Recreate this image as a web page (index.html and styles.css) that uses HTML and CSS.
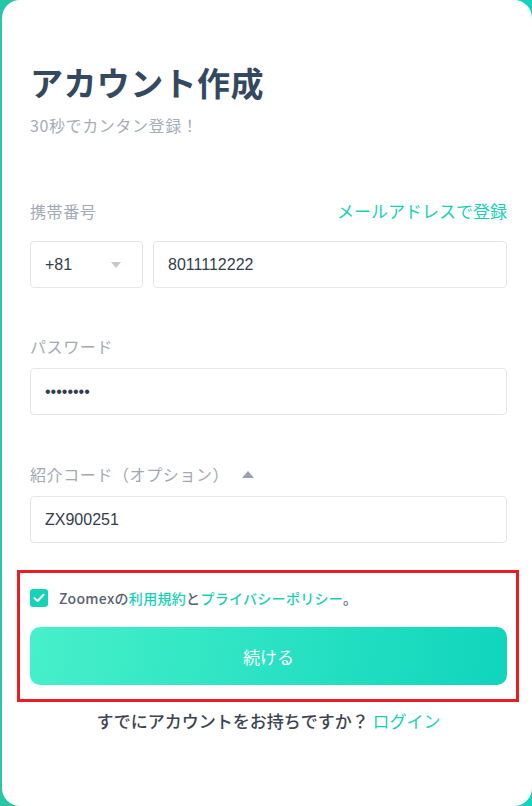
FILE: index.html
```
<!DOCTYPE html>
<html lang="ja">
<head>
  <meta charset="UTF-8">
  <title>アカウント作成</title>
  <link rel="stylesheet" href="styles.css">
</head>
<body>
  <div class="card">
    <h1>アカウント作成</h1>
    <p class="sub">30秒でカンタン登録！</p>

    <div class="label-row">
      <label for="phone">携帯番号</label>
      <a href="#" class="switch">メールアドレスで登録</a>
    </div>
    <div class="phone-row">
      <div class="country">
        <span>+81</span>
        <span class="caret-down"></span>
      </div>
      <input type="text" id="phone" class="field" value="8011112222">
    </div>

    <label for="password" class="label">パスワード</label>
    <input type="password" id="password" class="field" value="12345678">

    <div class="label ref-label">
      <label for="ref">紹介コード（オプション）</label>
      <span class="caret-up"></span>
    </div>
    <input type="text" id="ref" class="field" value="ZX900251">

    <div class="highlight">
      <div class="agree">
        <span class="check">
          <svg width="12" height="10" viewBox="0 0 12 10"><path d="M1.5 5.2 L4.6 8 L10.5 1.8" fill="none" stroke="#fff" stroke-width="2" stroke-linecap="round" stroke-linejoin="round"/></svg>
        </span>
        <span>Zoomexの<a href="#">利用規約</a>と<a href="#">プライバシーポリシー</a>。</span>
      </div>
      <button class="submit">続ける</button>
    </div>

    <p class="login">すでにアカウントをお持ちですか？ <a href="#">ログイン</a></p>
  </div>
</body>
</html>
```

FILE: styles.css
```
body {
  margin: 0;
  height: 806px;
  overflow: hidden;
  background: linear-gradient(90deg, #26c6a6, #12d3bb);
  font-family: "Noto Sans CJK JP", "Noto Sans", sans-serif;
}
.card {
  box-sizing: border-box;
  margin-left: 2px;
  width: 530px;
  height: 806px;
  padding: 62px 25px 0 28px;
  background: #fff;
  border-radius: 18px;
}
h1 {
  margin: 0;
  font-size: 33px;
  line-height: 40px;
  font-weight: 700;
  letter-spacing: 0.4px;
  color: #34495e;
}
.sub {
  margin: 13px 0 0;
  font-size: 16px;
  line-height: 20px;
  letter-spacing: 0.6px;
  color: #a5adb8;
}
.label-row {
  display: flex;
  justify-content: space-between;
  align-items: baseline;
  margin-top: 64px;
  line-height: 24px;
}
.label-row label,
.label {
  display: block;
  font-size: 16px;
  letter-spacing: 0.6px;
  color: #a1a8b3;
}
.switch {
  font-size: 17px;
  color: #17d1b7;
  text-decoration: none;
}
.phone-row {
  display: flex;
  gap: 10px;
  margin-top: 18px;
}
.country {
  box-sizing: border-box;
  display: flex;
  align-items: center;
  justify-content: space-between;
  width: 113px;
  height: 47px;
  padding: 0 21px 0 14px;
  border: 1px solid #e3e6ea;
  border-radius: 4px;
  font-family: "Liberation Sans", Arial, sans-serif;
  font-size: 16px;
  color: #333d4b;
}
.caret-down {
  width: 0;
  height: 0;
  border-left: 5px solid transparent;
  border-right: 5px solid transparent;
  border-top: 6px solid #c3c8cf;
}
.field {
  box-sizing: border-box;
  display: block;
  width: 100%;
  height: 47px;
  padding: 0 14px;
  border: 1px solid #e3e6ea;
  border-radius: 4px;
  font-family: "Liberation Sans", Arial, sans-serif;
  font-size: 16px;
  color: #333d4b;
  outline: none;
}
.phone-row .field {
  flex: 1;
}
.label {
  margin: 48px 0 12px;
  line-height: 20px;
}
.ref-label {
  display: flex;
  align-items: center;
  margin-top: 49px;
}
.caret-up {
  margin-left: 13px;
  width: 0;
  height: 0;
  border-left: 6px solid transparent;
  border-right: 6px solid transparent;
  border-bottom: 7px solid #9aa2ad;
}
.highlight {
  margin: 27px -12px 0 -13px;
  padding: 16px 9px 14px 10px;
  border: 3px solid #ec1c24;
}
.agree {
  display: flex;
  align-items: center;
  gap: 11px;
  height: 18px;
  font-size: 14px;
  font-weight: 500;
  letter-spacing: 0.3px;
  color: #5b6270;
}
.agree a {
  color: #17d1b7;
  text-decoration: none;
}
.check {
  display: flex;
  align-items: center;
  justify-content: center;
  width: 18px;
  height: 18px;
  border-radius: 3px;
  background: #14d4b8;
}
.submit {
  display: block;
  width: 100%;
  height: 58px;
  margin-top: 20px;
  border: 0;
  border-radius: 10px;
  background: linear-gradient(100deg, #47f0c9, #0fd5bd);
  color: #fff;
  font-family: inherit;
  font-size: 17px;
  font-weight: 400;
}
.login {
  margin: 7px 0 0;
  text-align: center;
  font-size: 17px;
  line-height: 24px;
  font-weight: 500;
  color: #3d4451;
}
.login a {
  color: #17d1b7;
  text-decoration: none;
  font-weight: 400;
}
```
